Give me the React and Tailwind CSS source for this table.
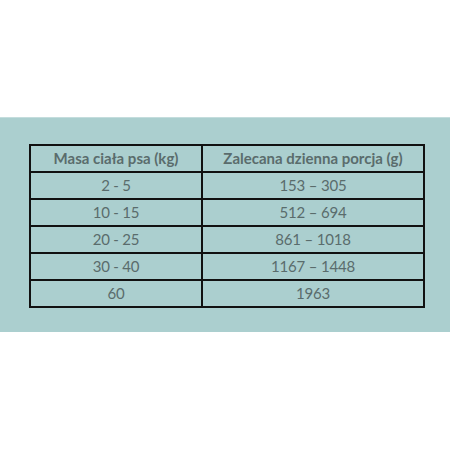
import React from 'react';

const rows = [
  ['2 - 5', '153 – 305'],
  ['10 - 15', '512 – 694'],
  ['20 - 25', '861 – 1018'],
  ['30 - 40', '1167 – 1448'],
  ['60', '1963'],
];

const App = () => {
  return (
    <div className="w-[450px] h-[450px] bg-white pt-[117px]" style={{ fontFamily: 'Lato, "Open Sans", sans-serif' }}>
      <div className="h-[215px] bg-[#abcfcf] border-t border-[#c4dddd] pt-[26px] pl-[29px]">
        <table className="w-[394px] border-collapse border-2 border-[#111] table-fixed text-[#5a6c6c]">
          <colgroup>
            <col className="w-[172px]" />
            <col className="w-[222px]" />
          </colgroup>
          <thead>
            <tr className="h-[27px]">
              <th className="border-2 border-[#111] text-[15px] font-bold text-center p-0">Masa ciała psa (kg)</th>
              <th className="border-2 border-[#111] text-[15px] font-bold text-center p-0">Zalecana dzienna porcja (g)</th>
            </tr>
          </thead>
          <tbody>
            {rows.map(([a, b]) => (
              <tr key={a} className="h-[27px]">
                <td className="border-2 border-[#111] text-[15px] tracking-[-0.2px] text-center p-0">{a}</td>
                <td className="border-2 border-[#111] text-[15px] tracking-[-0.2px] text-center p-0">{b}</td>
              </tr>
            ))}
          </tbody>
        </table>
      </div>
    </div>
  );
};

export default App;
